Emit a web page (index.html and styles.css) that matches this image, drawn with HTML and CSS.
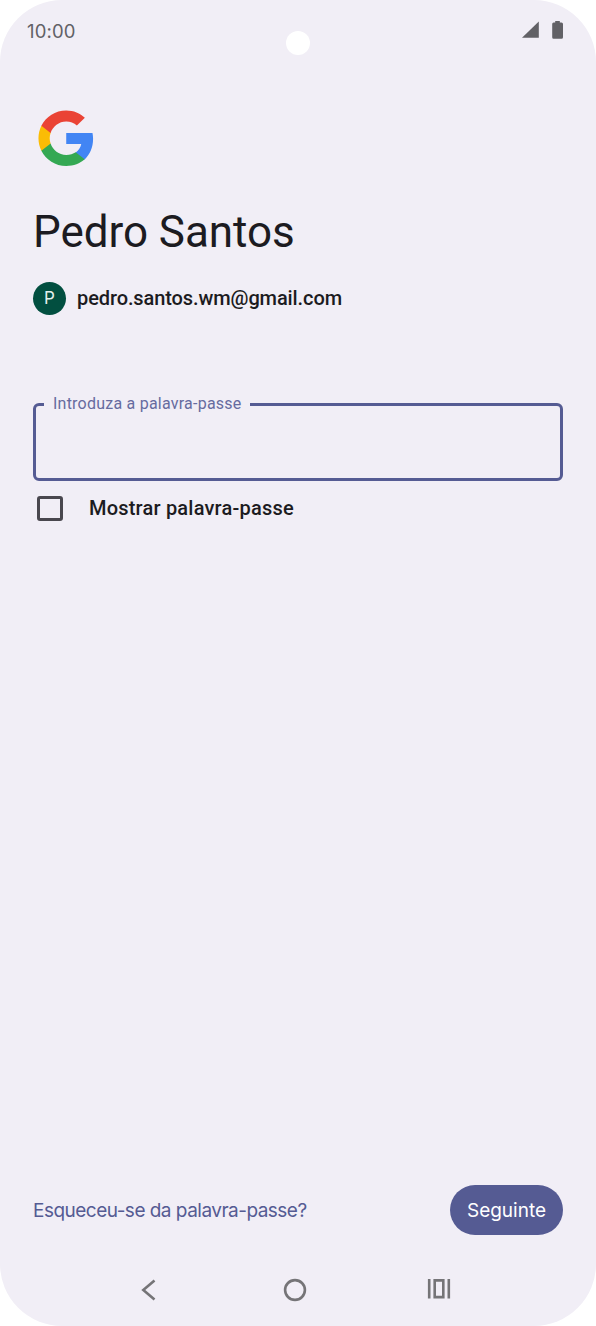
FILE: index.html
```html
<!DOCTYPE html>
<html lang="pt">
<head>
<meta charset="utf-8">
<title>Google</title>
<link rel="stylesheet" href="styles.css">
</head>
<body>
<div class="phone">
  <span class="camera"></span>
  <header class="status">
    <span class="time">10:00</span>
    <svg class="status-icons" width="42" height="20" viewBox="0 0 42 20">
      <path d="M0 17.700 16.800 1.500V17.700z"/>
      <path d="M33.200 1h4.600v1.500h1.700q1.500 0 1.500 1.500v13.200q0 1.500-1.500 1.500h-7.900q-1.400 0-1.400-1.500V4q0-1.500 1.400-1.500h1.600z"/>
    </svg>
  </header>
  <main class="content">
    <svg class="logo" width="56" height="56" viewBox="-0.400 -0.400 48.400 48.400">
      <path fill="#4285f4" d="M47.200 24.500c0-1.700-.2-3.400-.5-5H24v9.500h13c-.6 3-2.300 5.600-4.800 7.300v6h7.700c4.600-4.200 7.300-10.400 7.300-17.800z"/>
      <path fill="#34a853" d="M24 48c6.500 0 11.900-2.100 15.900-5.800l-7.700-6c-2.200 1.400-4.900 2.300-8.200 2.300-6.300 0-11.600-4.200-13.500-9.900h-8v6.200C6.500 42.700 14.600 48 24 48z"/>
      <path fill="#fbbc05" d="M10.500 28.600c-.5-1.400-.8-3-.8-4.600s.3-3.200.8-4.600v-6.200h-8C.9 16.500 0 20.100 0 24s.9 7.500 2.500 10.800z"/>
      <path fill="#ea4335" d="M24 9.500c3.500 0 6.700 1.200 9.200 3.600l6.900-6.800C35.900 2.400 30.500 0 24 0 14.600 0 6.500 5.400 2.500 13.200l8 6.200C12.400 13.700 17.700 9.500 24 9.500z"/>
    </svg>
    <h1 class="name">Pedro Santos</h1>
    <div class="account">
      <span class="avatar">P</span>
      <span class="email">pedro.santos.wm@gmail.com</span>
    </div>
    <fieldset class="field">
      <legend class="legend"><span class="label">Introduza a palavra-passe</span></legend>
    </fieldset>
    <div class="show">
      <span class="checkbox"></span>
      <span class="show-label">Mostrar palavra-passe</span>
    </div>
  </main>
  <footer class="actions">
    <a class="forgot">Esqueceu-se da palavra-passe?</a>
    <div class="next"><span class="next-label">Seguinte</span></div>
  </footer>
  <nav class="nav">
    <svg class="nav-back" width="16" height="24" viewBox="0 0 16 24"><path d="M14.500 2.500 3.300 12 14.500 21.500"/></svg>
    <svg class="nav-home" width="24" height="24" viewBox="0 0 24 24"><circle cx="12" cy="12" r="9.900"/></svg>
    <svg class="nav-recent" width="24" height="24" viewBox="0 0 24 24"><path d="M2.200 1v19.500M21.800 1v19.500M7.700 2.400h8.600v16.700H7.700z"/></svg>
  </nav>
</div>
</body>
</html>
```
FILE: styles.css
```css
* { box-sizing: border-box; }
body { margin: 0; background: #fff; }
.phone {
  position: relative;
  display: flex;
  flex-direction: column;
  width: 596px;
  height: 1326px;
  border-radius: 62px;
  background: #f1eef6;
  color: #1c1b21;
  font-family: Roboto, "Liberation Sans", sans-serif;
  white-space: nowrap;
}
.camera {
  position: absolute;
  left: 286px;
  top: 30.500px;
  width: 24px;
  height: 24px;
  border-radius: 50%;
  background: #fff;
}
.status {
  display: flex;
  justify-content: space-between;
  align-items: center;
  height: 60px;
  padding: 0 32px 0 27px;
}
.time { padding-top: 2px; font: 18.500px/24px Inter, sans-serif; letter-spacing: 0.150px; color: #626166; }
.status-icons { fill: #626166; }
.content { display: flex; flex-direction: column; padding: 50px 33px 0; }
.logo { margin-left: 5px; }
.name {
  margin: 36px 0 0;
  font: 400 44px/60px Roboto, sans-serif;
  letter-spacing: -0.050px;
}
.account { display: flex; align-items: center; gap: 11px; height: 34px; margin-top: 19px; }
.avatar {
  width: 33px;
  height: 33px;
  border-radius: 50%;
  background: #024f40;
  color: #e4f0ed;
  font: 17px/33px Inter, sans-serif;
  text-align: center;
}
.email { font: 500 20px/26px Roboto, sans-serif; letter-spacing: -0.100px; }
.field {
  height: 86px;
  margin: 80px 0 0;
  padding: 0 8px;
  border: 3px solid #555b93;
  border-radius: 6px;
}
.legend { padding: 0 8px 0 9px; }
.label { display: block; font: 16px/18px Roboto, sans-serif; letter-spacing: 0.230px; color: #666b9f; }
.show { display: flex; align-items: center; gap: 26px; height: 26px; margin: 14px 0 0 4px; }
.checkbox { width: 26px; height: 25px; margin-top: 1px; border: 3px solid #49474e; border-radius: 3px; }
.show-label { font: 500 20px/26px Roboto, sans-serif; letter-spacing: 0.200px; }
.actions {
  display: flex;
  align-items: center;
  justify-content: space-between;
  height: 50px;
  margin-top: auto;
  padding: 0 33px;
}
.forgot { padding-top: 2px; font: 19px/26px Inter, sans-serif; letter-spacing: -0.520px; color: #555b93; }
.next {
  width: 113px;
  height: 50px;
  border-radius: 25px;
  background: #555b93;
  color: #fff;
  font: 19px/52px Inter, sans-serif;
  text-align: center;
}
.nav {
  display: flex;
  height: 91px;
  padding: 43px 0 0 140px;
}
.nav svg { fill: none; stroke: #757477; stroke-width: 2.600; }
.nav-home { margin-left: 127px; }
.nav-recent { margin-left: 120px; }
```
